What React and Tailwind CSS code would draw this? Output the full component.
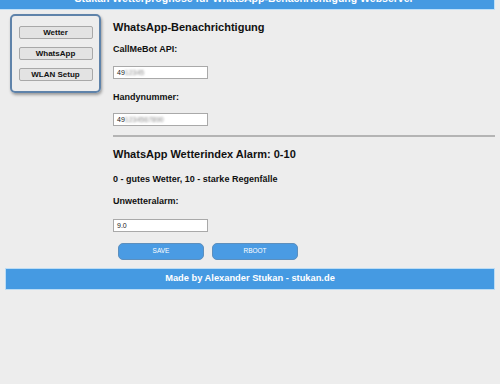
const FONT = "font-['Liberation_Sans',Arial,sans-serif]";

function NavButton({ label }) {
  return (
    <button className="w-[74px] h-[13px] bg-[#e3e3e3] border border-[#a8a8a8] rounded-[2px] text-[8px] leading-[11px] font-bold text-[#111]">
      {label}
    </button>
  );
}

function Field({ prefix, hidden, className = '' }) {
  return (
    <div className={`w-[95px] h-[13px] bg-white border border-[#a9a9a9] flex items-center pl-[3px] text-[7px] text-[#222] leading-none ${className}`}>
      <span>{prefix}</span>
      {hidden && <span className="blur-[1px] text-[#8a8a8a]">{hidden}</span>}
    </div>
  );
}

function BlueButton({ label }) {
  return (
    <button className="w-[86px] h-[17px] bg-[#4a9be3] border border-[#5d8fbd] rounded-[5px] text-white text-[6.5px] leading-none">
      {label}
    </button>
  );
}

export default function App() {
  return (
    <div className={`${FONT} bg-[#ededed] w-[500px] h-[384px] overflow-hidden text-[#111]`}>
      {/* header, scrolled mostly out of view */}
      <div className="w-[495px] h-[10px] bg-[#459ae2] border-b border-r border-[#bfe0f8] overflow-hidden">
        <div className="mt-[-8px] text-center text-white font-bold text-[10.5px] leading-[13px] pr-[6px]">
          Stukan Wetterprognose für WhatsApp-Benachrichtigung Webserver
        </div>
      </div>

      <div className="flex">
        <div className="ml-[10px] mt-[4px] w-[91px] h-[79px] border-2 border-[#5f83aa] rounded-[5px] shadow-[1px_2px_3px_rgba(0,0,0,0.35)] flex flex-col items-center pt-[10px] gap-[8px]">
          <NavButton label="Wetter" />
          <NavButton label="WhatsApp" />
          <NavButton label="WLAN Setup" />
        </div>

        <div className="ml-[12px] w-[382px] flex flex-col">
          <h3 className="mt-[11px] text-[11px] leading-[13px] font-bold">WhatsApp-Benachrichtigung</h3>
          <div className="mt-[10px] text-[9px] leading-[11px] font-bold">CallMeBot API:</div>
          <Field prefix="49" hidden="12345" className="mt-[11px]" />
          <div className="mt-[13px] text-[9px] leading-[11px] font-bold">Handynummer:</div>
          <Field prefix="49" hidden="1234567890" className="mt-[10px]" />
          <div className="mt-[9px] h-[2px] bg-[#b4b4b4]" />
          <h3 className="mt-[11px] text-[11px] leading-[13px] font-bold">WhatsApp Wetterindex Alarm: 0-10</h3>
          <div className="mt-[13px] text-[9px] leading-[11px] font-bold">0 - gutes Wetter, 10 - starke Regenfälle</div>
          <div className="mt-[11px] text-[9px] leading-[11px] font-bold">Unwetteralarm:</div>
          <Field prefix="9.0" className="mt-[12px]" />
          <div className="mt-[11px] ml-[5px] flex gap-[8px]">
            <BlueButton label="SAVE" />
            <BlueButton label="RBOOT" />
          </div>
        </div>
      </div>

      <div className="mt-[8px] mx-[5px] h-[22px] bg-[#459ae2] border border-[#bcdcf4] flex items-center justify-center text-white font-bold text-[9.3px]">
        Made by Alexander Stukan - stukan.de
      </div>
    </div>
  );
}
